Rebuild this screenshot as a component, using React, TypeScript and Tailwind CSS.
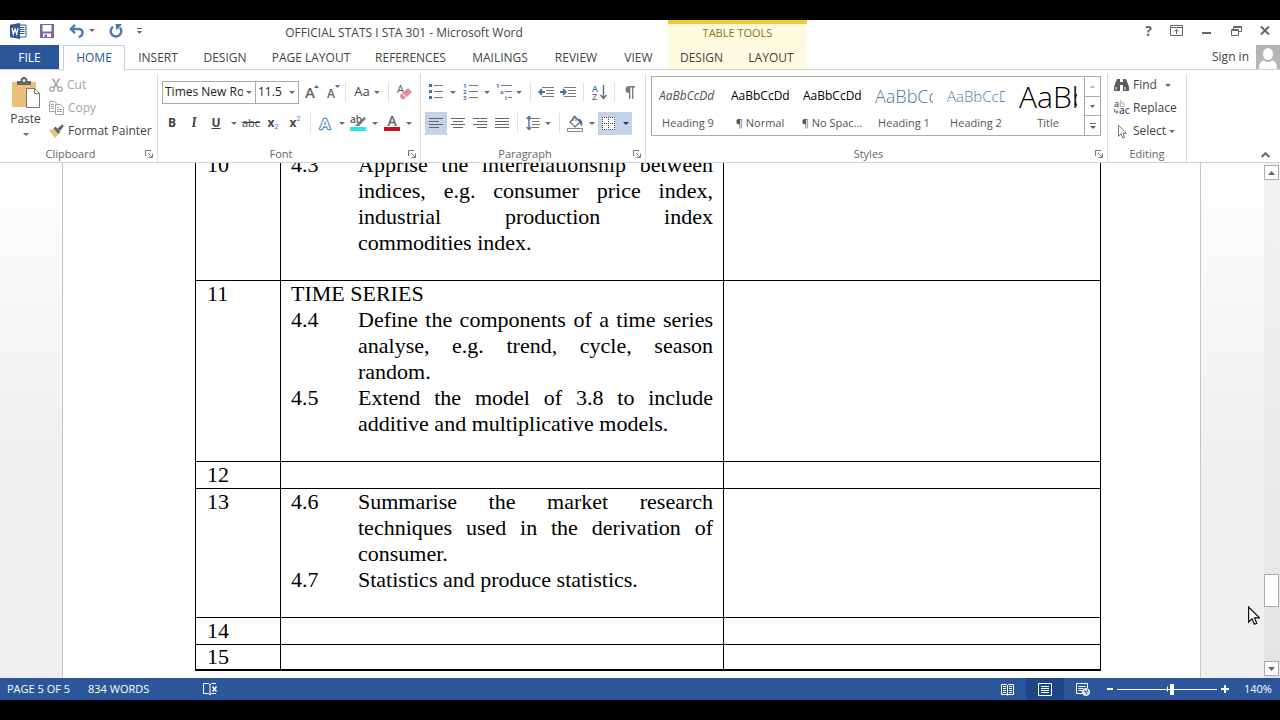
import React from "react";

type Kids = { children?: React.ReactNode };

const Caret = ({ dark = false }: { dark?: boolean }) => (
  <svg width="6" height="3" viewBox="0 0 6 3" className={dark ? "text-[#1f3763]" : "text-[#6a6a6a]"} aria-hidden="true">
    <path d="M0 0h6L3 3z" fill="currentColor" />
  </svg>
);

const Sep = ({ className = "mx-1" }: { className?: string }) => (
  <span className={`h-5 w-px shrink-0 bg-[#e1e1e1] ${className}`} />
);

function Tool({ label, w = "w-[22px]", active = false, children }: Kids & { label: string; w?: string; active?: boolean }) {
  return (
    <button
      type="button"
      aria-label={label}
      title={label}
      className={`flex h-[23px] shrink-0 items-center justify-center ${w} ${active ? "bg-[#c5d3ea]" : ""}`}
    >
      {children}
    </button>
  );
}

function Group({ title, width, launcher = true, children }: Kids & { title: string; width: string; launcher?: boolean }) {
  return (
    <section aria-label={title} className={`flex shrink-0 flex-col border-r border-[#dcdcdc] ${width}`}>
      <div className="flex-1">{children}</div>
      <div className="flex h-4 items-center text-[11px] text-[#666]">
        <span className="flex-1 text-center">{title}</span>
        {launcher && (
          <button type="button" aria-label={`${title} settings`} className="ml-1 mr-1">
            <svg width="8" height="8" viewBox="0 0 8 8" fill="none" stroke="#777">
              <path d="M.5 6V.5H6M3 3l4 4M7.500 3.500v4h-4" />
            </svg>
          </button>
        )}
      </div>
    </section>
  );
}

const WordLogo = () => (
  <svg width="17" height="16" viewBox="0 0 17 16" aria-hidden="true">
    <path d="M9 2h7v12H9z" fill="#fff" stroke="#2b579a" />
    <path d="M10 4.500h4.500M10 6.500h4.500M10 8.500h4.500M10 10.500h4.500" stroke="#2b579a" />
    <path d="M0 1.800 10 0v16L0 14.200z" fill="#2b579a" />
    <path d="m2 5 1.300 6L5 6l1.700 5L8 5" fill="none" stroke="#fff" strokeWidth="1.300" />
  </svg>
);

const SaveIcon = () => (
  <svg width="14" height="14" viewBox="0 0 14 14" aria-hidden="true">
    <path d="M0 0h14v14H0z" fill="#8064a2" />
    <path d="M2.500 1h9v6.500h-9z" fill="#fff" />
    <path d="M3 9.500h8V13H3z" fill="#fff" />
    <path d="M4.500 10.500H7V13H4.500z" fill="#8064a2" />
  </svg>
);

const UndoIcon = () => (
  <svg width="15" height="14" viewBox="0 0 15 14" fill="none" stroke="#4a7bb0" strokeWidth="2.400" aria-hidden="true">
    <path d="M6 .8 1.800 5 6 9.200M2 5h7.500c2.500 0 4 1.500 4 3.500 0 2.500-1.500 4-4 4.500" />
  </svg>
);

const RedoIcon = () => (
  <svg width="14" height="14" viewBox="0 0 14 14" fill="none" aria-hidden="true">
    <path d="M10.800 3.500A5.300 5.300 0 1 1 4 2.800" stroke="#4a7bb0" strokeWidth="2.400" />
    <path d="M6.500 0H13L7.500 6.500z" fill="#4a7bb0" />
  </svg>
);

const PasteIcon = () => (
  <svg width="30" height="32" viewBox="0 0 30 32" aria-hidden="true">
    <path d="M1 5h24v25H1z" fill="#ecc078" />
    <path d="M6 4h3.500c0-2.500 1.500-4 3.500-4s3.500 1.500 3.500 4H20v4H6z" fill="#666" />
    <circle cx="13" cy="3.500" r="1.300" fill="#fff" />
    <path d="M15.500 11.500h8l5 5v14h-13z" fill="#fff" stroke="#777" />
    <path d="M23.500 11.500v5h5" fill="none" stroke="#777" />
  </svg>
);

const CutIcon = () => (
  <svg width="14" height="14" viewBox="0 0 14 14" fill="none" stroke="#a6a6a6" aria-hidden="true">
    <path d="m3.500.5 5.500 9M10.500.5 5 9.500" strokeWidth="1.700" />
    <circle cx="3" cy="11" r="2.200" strokeWidth="1.300" />
    <circle cx="11" cy="11" r="2.200" strokeWidth="1.300" />
  </svg>
);

const CopyIcon = () => (
  <svg width="15" height="14" viewBox="0 0 15 14" fill="#fff" stroke="#a6a6a6" aria-hidden="true">
    <path d="M.5.5h5l2 2v8h-7zM2 3.500h3M2 5.500h3M2 7.500h3" />
    <path d="M6.500 3.500h5l3 3v7h-8zM8 8.500h5M8 10.500h5M8 6.500h2" />
  </svg>
);

const BrushIcon = () => (
  <svg width="15" height="14" viewBox="0 0 15 14" aria-hidden="true">
    <path d="m0 6 5-1 5 5-4 4z" fill="#ecc078" />
    <path d="m4.500 4.500 2-2L11.500 8l-2 2z" fill="#666" />
    <path d="m8 5 5-4.500L15 2l-4 5z" fill="#666" />
  </svg>
);

const GlyphA = ({ size, up }: { size: number; up: boolean }) => (
  <svg width="15" height="16" viewBox="0 0 15 16" fontFamily="Open Sans, sans-serif" aria-hidden="true">
    <text x="0" y="14" fontSize={size} fontWeight="600" fill="#666">A</text>
    <path d={up ? "M9 4h5l-2.500-3z" : "M8 1h5l-2.500 3z"} fill="#3f72ab" />
  </svg>
);

const EraserIcon = () => (
  <svg width="15" height="16" viewBox="0 0 15 16" fontFamily="Open Sans, sans-serif" aria-hidden="true">
    <text x="0" y="9" fontSize="11" fill="#555">A</text>
    <path d="M3.500 10.500 11 4l4 4-7.500 7-2.500.5-2-2.500z" fill="#e88a9c" />
    <path d="m5 9 4.500 4.500" stroke="#fff" />
  </svg>
);

const TextEffectIcon = () => (
  <svg width="14" height="15" viewBox="0 0 14 15" fontFamily="Open Sans, sans-serif" aria-hidden="true">
    <text x="2" y="13" fontSize="15" fontWeight="600" fill="#fff" stroke="#5f8fc4" strokeWidth="2.600" strokeLinejoin="round" paintOrder="stroke">A</text>
  </svg>
);

const HighlightIcon = () => (
  <svg width="17" height="16" viewBox="0 0 17 16" fontFamily="Open Sans, sans-serif" aria-hidden="true">
    <text x="0" y="8" fontSize="10" fontWeight="600" fill="#555">ab</text>
    <path d="m6 10 8-8 2 1.500L9 11H5z" fill="#777" />
    <path d="M0 12h16v4H0z" fill="#25e4e4" />
  </svg>
);

const FontColorIcon = () => (
  <svg width="16" height="16" viewBox="0 0 16 16" fontFamily="Open Sans, sans-serif" aria-hidden="true">
    <text x="3.500" y="11" fontSize="14" fontWeight="600" fill="#666">A</text>
    <path d="M0 12h16v4H0z" fill="#c8141e" />
  </svg>
);

const BulletsIcon = () => (
  <svg width="14" height="16" viewBox="0 0 14 16" aria-hidden="true">
    <path d="M0 0h3v3H0zM0 6h3v3H0zM0 12h3v3H0z" fill="#3f72ab" />
    <path d="M5 1.500h9M5 7.500h9M5 13.500h9" stroke="#777" />
  </svg>
);

const NumberingIcon = () => (
  <svg width="15" height="18" viewBox="0 0 15 18" fontFamily="Open Sans, sans-serif" aria-hidden="true">
    <g fontSize="6" fontWeight="700" fill="#3f72ab">
      <text x="0" y="5">1</text>
      <text x="0" y="11">2</text>
      <text x="0" y="17">3</text>
    </g>
    <path d="M6 2.500h9M6 8.500h9M6 14.500h9" stroke="#777" />
  </svg>
);

const MultilevelIcon = () => (
  <svg width="17" height="18" viewBox="0 0 17 18" fontFamily="Open Sans, sans-serif" aria-hidden="true">
    <g fontSize="6" fontWeight="700" fill="#3f72ab">
      <text x="0" y="5">1</text>
      <text x="4" y="11">a</text>
      <text x="9" y="17">i</text>
    </g>
    <path d="M5 2.500h11M9 8.500h7M12 14.500h4" stroke="#777" />
  </svg>
);

const IndentIcon = ({ out }: { out: boolean }) => (
  <svg width="16" height="10" viewBox="0 0 16 10" fill="none" aria-hidden="true">
    <path d="M4 .5h12M8 3.500h8M8 6.500h8M4 9.500h12" stroke="#777" />
    <path d={out ? "M7 5H1.500M4 2.200 1.200 5 4 7.800" : "M0 5h5.500M3 2.200 5.800 5 3 7.800"} stroke="#3f72ab" strokeWidth="1.800" />
  </svg>
);

const SortIcon = () => (
  <svg width="15" height="17" viewBox="0 0 15 17" fontFamily="Open Sans, sans-serif" aria-hidden="true">
    <text x="0" y="8" fontSize="9" fontWeight="600" fill="#3f72ab">A</text>
    <text x="0" y="16" fontSize="9" fontWeight="600" fill="#8064a2">Z</text>
    <path d="M11.500 1v13M8.500 11l3 3.500 3-3.500" fill="none" stroke="#666" strokeWidth="1.300" />
  </svg>
);

const PilcrowIcon = () => (
  <svg width="10" height="13" viewBox="0 0 10 13" aria-hidden="true">
    <path d="M4 0h6v1.500H4zM4 0v7a3.500 3.500 0 0 1 0-7z" fill="#777" />
    <path d="M4.700 0v13M7.700 0v13" stroke="#777" strokeWidth="1.300" />
  </svg>
);

const alignPaths = {
  left: "M0 .5h14M0 3.500h10M0 6.500h14M0 9.500h10",
  center: "M0 .5h14M2 3.500h10M0 6.500h14M2 9.500h10",
  right: "M0 .5h14M4 3.500h10M0 6.500h14M4 9.500h10",
  justify: "M0 .5h14M0 3.500h14M0 6.500h14M0 9.500h14",
};

const AlignIcon = ({ kind }: { kind: keyof typeof alignPaths }) => (
  <svg width="14" height="10" viewBox="0 0 14 10" aria-hidden="true">
    <path d={alignPaths[kind]} stroke="#666" />
  </svg>
);

const SpacingIcon = () => (
  <svg width="14" height="16" viewBox="0 0 14 16" fill="none" aria-hidden="true">
    <path d="M3 1v14M.7 4 3 1.500 5.300 4M.7 12 3 14.500 5.300 12" stroke="#3f72ab" strokeWidth="1.400" />
    <path d="M6 3.500h8M6 6.500h7M6 9.500h8M6 12.500h7" stroke="#777" />
  </svg>
);

const BucketIcon = () => (
  <svg width="17" height="17" viewBox="0 0 17 17" fill="none" aria-hidden="true">
    <path d="m3 7 5-5 5 5-5 5z" fill="#fff" stroke="#666" strokeWidth="1.200" />
    <path d="M6 6V2.500C6 .5 9 .5 9 2.500V6" stroke="#666" />
    <path d="M11 3.500c4 .5 5.500 4 3.500 8l-2-4z" fill="#3f72ab" />
    <path d="M.5 13.500h15v3H.5z" fill="#fff" stroke="#888" />
  </svg>
);

const BordersIcon = () => (
  <svg width="13" height="13" viewBox="0 0 13 13" fill="none" aria-hidden="true">
    <path d="M0 0h13v13H0z" fill="#fff" />
    <path d="M.5 0v13M6.500 0v13M12.500 0v13M0 .5h13M0 6.500h13M0 12.500h13" stroke="#444" strokeDasharray="1 1" />
  </svg>
);

const FindIcon = () => (
  <svg width="15" height="12" viewBox="0 0 15 12" fill="#5c5c5c" aria-hidden="true">
    <path d="M3 0h3v3h3V0h3l2 5 1 3v4H9V6H6v6H0V8l1-3z" />
    <path d="M2 8v3M11 8v3" stroke="#fff" />
  </svg>
);

const ReplaceIcon = () => (
  <svg width="16" height="16" viewBox="0 0 16 16" fontFamily="Open Sans, sans-serif" aria-hidden="true">
    <text x="0" y="7" fontSize="9" fontWeight="600"><tspan fill="#555">a</tspan><tspan fill="#b0b0b0">b</tspan></text>
    <text x="5" y="14" fontSize="10" fontWeight="600"><tspan fill="#555">a</tspan><tspan fill="#3f72ab">c</tspan></text>
    <path d="M.7 9v3h3M2.500 10.500 4 12l-1.500 1.500" fill="none" stroke="#3f72ab" />
  </svg>
);

const PointerIcon = ({ w, h, stroke }: { w: number; h: number; stroke: string }) => (
  <svg width={w} height={h} viewBox="0 0 12 19" aria-hidden="true">
    <path d="M.6 1v15l3.500-3.300 2.300 5.500 2.400-1-2.300-5.300h5z" fill="#fff" stroke={stroke} strokeWidth="1.200" />
  </svg>
);

const styles = [
  { name: "Heading 9", sample: "AaBbCcDd", look: "text-[12px] italic text-[#505050]" },
  { name: "¶ Normal", sample: "AaBbCcDd", look: "text-[12px] text-black" },
  { name: "¶ No Spac...", sample: "AaBbCcDd", look: "text-[12px] text-black" },
  { name: "Heading 1", sample: "AaBbCcD", look: "text-[18px] font-light text-[#3f7ba6]" },
  { name: "Heading 2", sample: "AaBbCcD", look: "text-[15px] font-light text-[#3f7ba6]" },
  { name: "Title", sample: "AaBbC", look: "text-[30px] font-light text-black" },
];

const tabs = [
  { name: "INSERT", w: "w-[66px]" },
  { name: "DESIGN", w: "w-[68px]" },
  { name: "PAGE LAYOUT", w: "w-[104px]" },
  { name: "REFERENCES", w: "w-[95px]" },
  { name: "MAILINGS", w: "w-[84px]" },
  { name: "REVIEW", w: "w-[68px]" },
  { name: "VIEW", w: "w-[57px]" },
];

function TitleBar() {
  return (
    <header className="flex h-[25px] shrink-0 items-stretch text-[#444]">
      <div className="flex w-[152px] shrink-0 items-center pl-[10px] pb-1">
        <WordLogo />
        <button type="button" aria-label="Save" className="ml-[13px]"><SaveIcon /></button>
        <button type="button" aria-label="Undo" className="ml-[15px] flex items-center gap-[5px]"><UndoIcon /><Caret /></button>
        <button type="button" aria-label="Redo" className="ml-[14px]"><RedoIcon /></button>
        <button type="button" aria-label="Customize toolbar" className="ml-[14px]">
          <svg width="5" height="6" viewBox="0 0 5 6"><path d="M0 .5h5" stroke="#666" /><path d="M0 3h5L2.500 6z" fill="#666" /></svg>
        </button>
      </div>
      <h1 className="w-[516px] shrink-0 pr-3 text-center text-[12px] leading-[25px]">OFFICIAL STATS I STA 301 - Microsoft Word</h1>
      <div className="w-[139px] shrink-0 border-t-4 border-[#f0c832] bg-[#fffbe0] text-center text-[11px] leading-[18px] text-[#8a7420]">TABLE TOOLS</div>
      <div className="flex flex-1 items-center justify-end gap-[18px] pr-[10px] pb-1 text-[#666]">
        <button type="button" aria-label="Help" className="text-[14px] font-bold leading-4">?</button>
        <button type="button" aria-label="Ribbon display options">
          <svg width="13" height="11" viewBox="0 0 13 11" fill="none" stroke="currentColor"><path d="M.5.5h12v10H.5zM.5 2.500h12M6.500 9V4.500M4.500 6.500l2-2 2 2" /></svg>
        </button>
        <button type="button" aria-label="Minimize"><svg width="12" height="10" viewBox="0 0 12 10"><path d="M1 7h9" stroke="currentColor" strokeWidth="2" /></svg></button>
        <button type="button" aria-label="Restore">
          <svg width="11" height="10" viewBox="0 0 11 10" fill="none" stroke="currentColor"><path d="M2.500 3V.5h8v5H8M.5 3.500h7v6h-7zM.5 4.500h7M2.500 1.500h8" /></svg>
        </button>
        <button type="button" aria-label="Close"><svg width="10" height="9" viewBox="0 0 10 9"><path d="m1 .5 8 8M9 .5l-8 8" stroke="currentColor" strokeWidth="2" /></svg></button>
      </div>
    </header>
  );
}

function TabBar() {
  return (
    <nav aria-label="Ribbon tabs" className="flex h-[25px] shrink-0 border-b border-[#d4d4d4] text-[12px] text-[#444]">
      <button type="button" className="w-[59px] shrink-0 bg-[#2b579a] pt-px text-white">FILE</button>
      <button type="button" className="-mb-px ml-1 w-[62px] shrink-0 border-x border-t border-[#c3d0dc] bg-white text-[#2b579a]">HOME</button>
      {tabs.map((t) => (
        <button type="button" key={t.name} className={`shrink-0 whitespace-nowrap pt-[2px] ${t.w}`}>{t.name}</button>
      ))}
      <div className="ml-px flex w-[139px] shrink-0 bg-[#fffbe0] pt-[2px]">
        <button type="button" className="w-[67px]">DESIGN</button>
        <button type="button" className="w-[72px]">LAYOUT</button>
      </div>
      <div className="flex flex-1 items-center justify-end gap-[7px]">
        <a href="#signin">Sign in</a>
        <svg width="24" height="24" viewBox="0 0 24 24" role="img" aria-label="Account">
          <path d="M0 0h24v24H0z" fill="#b5b5b5" />
          <ellipse cx="12" cy="9" rx="5" ry="6" fill="#fff" />
          <path d="M3 24c0-6 2-8 5-8.500 2 2 6 2 8 0 3 .5 5 2.500 5 8.500z" fill="#fff" />
        </svg>
      </div>
    </nav>
  );
}

function Picker({ label, value, w }: { label: string; value: string; w: string }) {
  return (
    <label className={`relative flex h-[23px] shrink-0 items-center ${w}`}>
      <span className="sr-only">{label}</span>
      <select className="h-full w-full appearance-none overflow-hidden border border-[#ababab] bg-white pl-[2px] pr-3 text-[12px] text-[#222]">
        <option>{value}</option>
      </select>
      <span className="pointer-events-none absolute right-1 top-[10px]"><Caret /></span>
    </label>
  );
}

function Ribbon() {
  return (
    <div className="flex h-[93px] shrink-0 border-b border-[#d4d4d4] pt-1 text-[12px] text-[#444]">
      <Group title="Clipboard" width="w-[158px]">
        <div className="flex pl-[10px] pt-[3px]">
          <button type="button" className="flex w-[31px] flex-col items-center">
            <PasteIcon />
            <span className="mt-[2px] leading-4">Paste</span>
            <span className="mt-[6px]"><Caret /></span>
          </button>
          <div className="ml-2 flex flex-col text-[#a6a6a6]">
            <button type="button" className="flex h-[23px] items-center gap-1 pb-[7px]"><CutIcon />Cut</button>
            <button type="button" className="flex h-[23px] items-center gap-1 pb-[7px]"><CopyIcon />Copy</button>
            <button type="button" className="flex h-[23px] items-center gap-1 whitespace-nowrap pb-[7px] text-[#444]"><BrushIcon />Format Painter</button>
          </div>
        </div>
      </Group>

      <Group title="Font" width="w-[263px]">
        <div className="flex h-9 items-center pl-1">
          <Picker label="Font" value="Times New Roman" w="w-[94px]" />
          <div className="-ml-px"><Picker label="Font size" value="11.5" w="w-[44px]" /></div>
          <span className="w-[2px]" />
          <Tool label="Grow font"><GlyphA size={15} up /></Tool>
          <Tool label="Shrink font"><GlyphA size={12} up={false} /></Tool>
          <Sep className="ml-0 mr-1" />
          <Tool label="Change case" w="w-[34px]"><span className="mr-1 text-[13px]">Aa</span><Caret /></Tool>
          <Sep />
          <Tool label="Clear formatting"><EraserIcon /></Tool>
        </div>
        <div className="flex h-[26px] items-center pl-[3px]">
          <Tool label="Bold"><b>B</b></Tool>
          <Tool label="Italic"><i className="font-serif text-[13px] font-semibold">I</i></Tool>
          <Tool label="Underline"><b className="underline">U</b></Tool>
          <Tool label="Underline style" w="w-[13px]"><Caret /></Tool>
          <Tool label="Strikethrough"><s className="text-[11px]">abc</s></Tool>
          <Tool label="Subscript"><b>x</b><span className="mt-2 text-[7px] text-[#3f72ab]">2</span></Tool>
          <Tool label="Superscript"><b>x</b><span className="mb-2 text-[7px] text-[#3f72ab]">2</span></Tool>
          <Sep className="ml-1 mr-[3px]" />
          <Tool label="Text effects"><TextEffectIcon /></Tool>
          <Tool label="Text effects menu" w="w-[11px]"><Caret /></Tool>
          <Tool label="Highlight color"><HighlightIcon /></Tool>
          <Tool label="Highlight menu" w="w-3"><Caret /></Tool>
          <Tool label="Font color"><FontColorIcon /></Tool>
          <Tool label="Font color menu" w="w-3"><Caret /></Tool>
        </div>
      </Group>

      <Group title="Paragraph" width="w-[225px]">
        <div className="flex h-9 items-center pl-1">
          <Tool label="Bullets"><BulletsIcon /></Tool>
          <Tool label="Bullets menu" w="w-3"><Caret /></Tool>
          <Tool label="Numbering"><NumberingIcon /></Tool>
          <Tool label="Numbering menu" w="w-3"><Caret /></Tool>
          <Tool label="Multilevel list"><MultilevelIcon /></Tool>
          <Tool label="Multilevel menu" w="w-2"><Caret /></Tool>
          <Sep className="ml-[7px] mr-1" />
          <Tool label="Decrease indent"><IndentIcon out /></Tool>
          <Tool label="Increase indent"><IndentIcon out={false} /></Tool>
          <Sep />
          <Tool label="Sort"><SortIcon /></Tool>
          <Sep />
          <Tool label="Show marks"><PilcrowIcon /></Tool>
        </div>
        <div className="flex h-[26px] items-center pl-1">
          <Tool label="Align left" active><AlignIcon kind="left" /></Tool>
          <Tool label="Center"><AlignIcon kind="center" /></Tool>
          <Tool label="Align right"><AlignIcon kind="right" /></Tool>
          <Tool label="Justify"><AlignIcon kind="justify" /></Tool>
          <Sep />
          <Tool label="Line spacing"><SpacingIcon /></Tool>
          <Tool label="Line spacing menu" w="w-2"><Caret /></Tool>
          <Sep className="ml-[7px] mr-1" />
          <Tool label="Shading"><BucketIcon /></Tool>
          <Tool label="Shading menu" w="w-3"><Caret /></Tool>
          <Tool label="Borders" active w="w-[21px]"><BordersIcon /></Tool>
          <Tool label="Borders menu" active w="w-[13px]"><Caret dark /></Tool>
        </div>
      </Group>

      <Group title="Styles" width="w-[462px]">
        <div className="ml-[5px] mr-[6px] mt-[2px] flex h-[60px] border border-[#ababab]">
          {styles.map((s) => (
            <button type="button" key={s.name} className="flex w-[72px] shrink-0 flex-col items-center">
              <span className={`flex h-[38px] w-[58px] items-center overflow-hidden whitespace-nowrap ${s.look}`}>{s.sample}</span>
              <span className="whitespace-nowrap text-[11px] leading-4 text-[#555]">{s.name}</span>
            </button>
          ))}
          <div className="flex flex-1 flex-col divide-y divide-[#ababab] border-l border-[#ababab]">
            <button type="button" aria-label="Previous styles" className="flex flex-1 items-center justify-center">
              <svg width="5" height="3" viewBox="0 0 5 3"><path d="M0 3h5L2.500 0z" fill="#bbb" /></svg>
            </button>
            <button type="button" aria-label="Next styles" className="flex flex-1 items-center justify-center">
              <svg width="5" height="3" viewBox="0 0 5 3"><path d="M0 0h5L2.500 3z" fill="#666" /></svg>
            </button>
            <button type="button" aria-label="All styles" className="flex flex-1 items-center justify-center">
              <svg width="6" height="6" viewBox="0 0 6 6"><path d="M0 .5h6" stroke="#666" /><path d="M0 3h6L3 6z" fill="#666" /></svg>
            </button>
          </div>
        </div>
      </Group>

      <Group title="Editing" width="w-[79px]" launcher={false}>
        <div className="flex flex-col pl-[6px]">
          <button type="button" className="flex h-[22px] items-center gap-1"><FindIcon />Find<span className="ml-1"><Caret /></span></button>
          <button type="button" className="flex h-6 items-center gap-[3px]"><ReplaceIcon />Replace</button>
          <button type="button" className="flex h-[22px] items-center gap-[3px]"><span className="flex w-4 justify-center"><PointerIcon w={9} h={15} stroke="#666" /></span>Select<Caret /></button>
        </div>
      </Group>

      <div className="flex flex-1 items-end justify-end pb-1 pr-[10px]">
        <button type="button" aria-label="Collapse ribbon">
          <svg width="9" height="6" viewBox="0 0 9 6" fill="none" stroke="#666" strokeWidth="2"><path d="m.7 5 3.800-3.800L8.300 5" /></svg>
        </button>
      </div>
    </div>
  );
}

type Outcome = { no: string; lines: string[] };
type Week = { week: string; heading?: string; items: Outcome[] };

const weeks: Week[] = [
  {
    week: "10",
    items: [{ no: "4.3", lines: ["Apprise the interrelationship between", "indices, e.g. consumer price index,", "industrial production index", "commodities index."] }],
  },
  {
    week: "11",
    heading: "TIME SERIES",
    items: [
      { no: "4.4", lines: ["Define the components of a time series", "analyse, e.g. trend, cycle, season", "random."] },
      { no: "4.5", lines: ["Extend the model of 3.8 to include", "additive and multiplicative models."] },
    ],
  },
  { week: "12", items: [] },
  {
    week: "13",
    items: [
      { no: "4.6", lines: ["Summarise the market research", "techniques used in the derivation of", "consumer."] },
      { no: "4.7", lines: ["Statistics and produce statistics."] },
    ],
  },
  { week: "14", items: [] },
  { week: "15", items: [] },
];

function Syllabus() {
  return (
    <table className="w-full table-fixed border-separate border-spacing-0 border-b border-l border-black font-['Liberation_Serif',serif] text-[22px] leading-[26px] text-black">
      <colgroup>
        <col className="w-[85px]" />
        <col className="w-[443px]" />
        <col />
      </colgroup>
      <tbody>
        {weeks.map((w) => (
          <tr key={w.week} className="align-top last:leading-6">
            <td className="border-b border-r border-black pl-[11px]">{w.week}</td>
            <td className="border-b border-r border-black px-[10px]">
              {w.heading && <p>{w.heading}</p>}
              {w.items.map((item) => (
                <div key={item.no} className="flex">
                  <span className="w-[67px] shrink-0">{item.no}</span>
                  <p className="flex-1">
                    {item.lines.map((line, i) => (
                      <span key={line} className={`block whitespace-nowrap ${i < item.lines.length - 1 ? "[text-align-last:justify]" : ""}`}>{line} </span>
                    ))}
                  </p>
                </div>
              ))}
              {w.items.length > 0 && <div className="h-6" />}
            </td>
            <td className="border-b border-r border-black" />
          </tr>
        ))}
      </tbody>
    </table>
  );
}

function Document() {
  return (
    <main className="relative flex min-h-0 flex-1 overflow-hidden bg-gradient-to-b from-white to-[#efefef] to-60%">
      <div className="ml-[62px] mr-[63px] flex-1 border-x border-[#c6c6c6] bg-white pl-[132px] pr-[99px]">
        <div className="-mt-[11px]"><Syllabus /></div>
      </div>
      <div className="flex w-4 shrink-0 flex-col bg-gradient-to-b from-[#f3f3f3] to-[#e4e4e4] pb-[2px] pr-px pt-[2px]">
        <button type="button" aria-label="Scroll up" className="flex h-[15px] items-center justify-center border border-[#ababab] bg-white">
          <svg width="7" height="4" viewBox="0 0 7 4"><path d="M0 4h7L3.500 0z" fill="#666" /></svg>
        </button>
        <div className="flex flex-1 flex-col">
          <div className="grow-[394]" />
          <div className="h-[33px] border border-[#ababab] bg-white" />
          <div className="grow-[54]" />
        </div>
        <button type="button" aria-label="Scroll down" className="flex h-[15px] items-center justify-center border border-[#ababab] bg-white">
          <svg width="7" height="4" viewBox="0 0 7 4"><path d="M0 0h7L3.500 4z" fill="#666" /></svg>
        </button>
      </div>
      <div className="pointer-events-none absolute bottom-[53px] right-5"><PointerIcon w={12} h={19} stroke="#111" /></div>
    </main>
  );
}

function StatusBar() {
  return (
    <footer className="flex h-[22px] shrink-0 items-center bg-[#2b579a] pl-[7px] text-[11px] text-white">
      <span className="w-[81px]">PAGE 5 OF 5</span>
      <span className="w-[115px]">834 WORDS</span>
      <button type="button" aria-label="Proofing errors">
        <svg width="15" height="13" viewBox="0 0 15 13" fill="none" stroke="#fff"><path d="M7 12 5.500 10.500H.5v-10h5L7 2v10l1.500-1.500H13M7 2 8.500.5H13" /><path d="m9.500 3.500 4 5M13.500 3.500l-4 5" strokeWidth="1.500" /></svg>
      </button>
      <div className="ml-auto flex h-full items-center">
        <button type="button" aria-label="Read mode" className="flex h-full w-[38px] items-center justify-center">
          <svg width="13" height="13" viewBox="0 0 13 13" fill="none" stroke="#fff"><path d="M6.500 12.500v-10M6.500 11.500H.5v-10h5l1 1 1-1h5v10h-6M2 3.500h3M2 5.500h3M2 7.500h3M2 9.500h3M8 3.500h3M8 5.500h3M8 7.500h3M8 9.500h3" /></svg>
        </button>
        <button type="button" aria-label="Print layout" className="flex h-full w-[38px] items-center justify-center bg-[#1e4585]">
          <svg width="14" height="13" viewBox="0 0 14 13" fill="none" stroke="#fff"><path d="M.5.5h13v12H.5zM3 3.500h8M3 5.500h8M3 7.500h8M3 9.500h8" /></svg>
        </button>
        <button type="button" aria-label="Web layout" className="flex h-full w-[38px] items-center justify-center">
          <svg width="14" height="13" viewBox="0 0 14 13" fill="none" stroke="#fff"><path d="M7 10.500H.5V.5h11V5M2.500 3.500h7M2.500 5.500h5M2.500 7.500h4" /><circle cx="10" cy="9" r="3.500" fill="#c9d8ee" /><path d="m8 8 2 .5.500 2.500M11 6.500l1 2.500" stroke="#2b579a" /></svg>
        </button>
        <button type="button" aria-label="Zoom out" className="ml-[5px]"><svg width="6" height="8" viewBox="0 0 6 8"><path d="M0 4h6" stroke="#fff" strokeWidth="2" /></svg></button>
        <div className="relative ml-1 flex w-[100px] items-center">
          <span className="absolute left-[50px] top-1/2 h-[5px] w-px -translate-y-1/2 bg-white" />
          <input
            type="range"
            aria-label="Zoom"
            min={0}
            max={100}
            defaultValue={55}
            className="h-3 w-full appearance-none bg-[linear-gradient(#fff,#fff)] bg-[length:100%_1px] bg-center bg-no-repeat [&::-webkit-slider-thumb]:h-[11px] [&::-webkit-slider-thumb]:w-1 [&::-webkit-slider-thumb]:appearance-none [&::-webkit-slider-thumb]:bg-white"
          />
        </div>
        <button type="button" aria-label="Zoom in" className="ml-1"><svg width="8" height="8" viewBox="0 0 8 8"><path d="M0 4h8M4 0v8" stroke="#fff" strokeWidth="2" /></svg></button>
        <span className="ml-[15px] w-9">140%</span>
      </div>
    </footer>
  );
}

export default function App() {
  return (
    <div className="flex h-screen flex-col overflow-hidden bg-black py-5 font-['Open_Sans',sans-serif]">
      <div className="flex min-h-0 flex-1 flex-col bg-white">
        <TitleBar />
        <TabBar />
        <Ribbon />
        <Document />
        <StatusBar />
      </div>
    </div>
  );
}
